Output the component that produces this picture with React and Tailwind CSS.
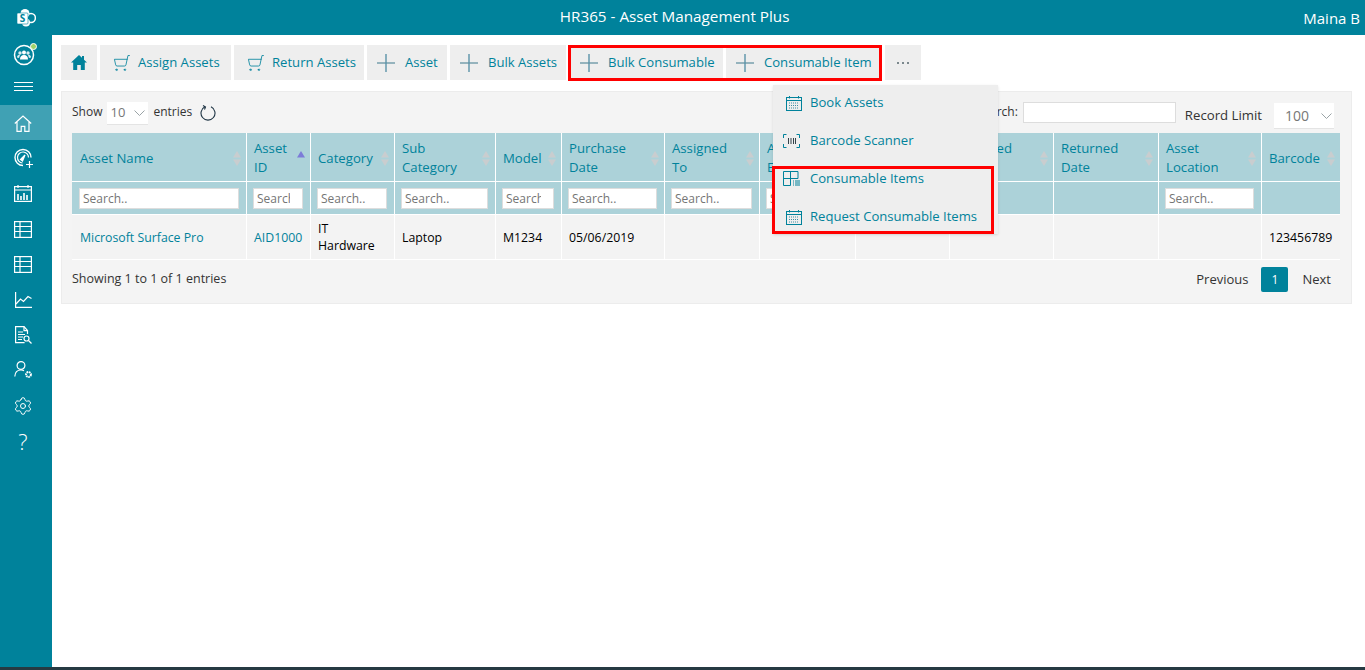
import React from 'react';
import { Settings, ShoppingCart } from 'lucide-react';

const toolbar = [
  { label: 'Assign Assets', icon: 'cart', width: 'w-[131px]' },
  { label: 'Return Assets', icon: 'cart', width: 'w-[130px]' },
  { label: 'Asset', icon: 'plus', width: 'w-[80px]' },
  { label: 'Bulk Assets', icon: 'plus', width: 'w-[116px]' },
];

const columns = [
  { title: 'Asset Name', width: 'w-[174px]', filter: true },
  { title: 'Asset\nID', width: 'w-[64px]', filter: true, sorted: true },
  { title: 'Category', width: 'w-[84px]', filter: true },
  { title: 'Sub\nCategory', width: 'w-[101px]', filter: true },
  { title: 'Model', width: 'w-[66px]', filter: true },
  { title: 'Purchase\nDate', width: 'w-[103px]', filter: true },
  { title: 'Assigned\nTo', width: 'w-[95px]', filter: true },
  { title: 'Asset\nExpiry', width: 'w-[96px]', filter: true },
  { title: 'Status', width: 'w-[94px]', filter: true },
  { title: 'Assigned\nDate', width: 'w-[104px]' },
  { title: 'Returned\nDate', width: 'w-[105px]' },
  { title: 'Asset\nLocation', width: 'w-[103px]', filter: true },
  { title: 'Barcode', width: 'w-[79px]' },
];

const row = [
  { text: 'Microsoft Surface Pro', link: true },
  { text: 'AID1000', link: true },
  { text: 'IT\nHardware' },
  { text: 'Laptop' },
  { text: 'M1234' },
  { text: '05/06/2019' },
  { text: '' },
  { text: '' },
  { text: '' },
  { text: '' },
  { text: '' },
  { text: '' },
  { text: '123456789' },
];

const PlusIcon = () => (
  <svg width="18" height="18" viewBox="0 0 18 18" className="shrink-0">
    <path d="M0 9h18" stroke="#6f9aa8" strokeWidth="1.4" />
    <path d="M9 0v18" stroke="#5b93a8" strokeWidth="1.4" />
  </svg>
);

const CartIcon = () => (
  <ShoppingCart size={18} strokeWidth={1.1} color="#00829b" className="shrink-0 -scale-x-100" />
);

const HomeFilled = () => (
  <svg width="16" height="15" viewBox="0 0 16 15" fill="#00829b">
    <path d="M8 0 0 7.5h2.2V15h4v-5h3.6v5h4V7.5H16L13 4.7V1h-2v1.8z" />
  </svg>
);

const CalendarIcon = () => (
  <svg width="16" height="15" viewBox="0 0 16 15" fill="none" stroke="#00829b" className="shrink-0 ml-[3px]">
    <rect x="0.5" y="1.5" width="15" height="13" />
    <path d="M0.5 4.5h15M3.500 0v2.500M12.500 0v2.500" />
    <path d="M3 7h10M3 9.500h10M3 12h10" strokeDasharray="1 1" stroke="#3d8fa3" />
  </svg>
);

const BarcodeIcon = () => (
  <svg width="17" height="14" viewBox="0 0 17 14" fill="none" stroke="#00829b" className="shrink-0">
    <path d="M3.500.5h-3v3.500M.5 10v3.500h3M13.500.5h3v3.500M16.500 10v3.500h-3" />
    <path d="M5.500 4v6M8 4v6M10.500 4v6M12.500 4v6" stroke="#33424a" />
  </svg>
);

const GridListIcon = () => (
  <svg width="17" height="15" viewBox="0 0 17 15" fill="none" stroke="#00829b" className="shrink-0 -mt-[2px]">
    <path d="M.5 14.500V.5h14.500v7M7.500.5v14M.5 7.500H15M.5 14.500h7" />
    <path d="M10 10h1M12 10h5M10 12h1M12 12h5M10 14h1M12 14h5" />
  </svg>
);

const SharePointIcon = () => (
  <svg width="19" height="18" viewBox="0 0 19 18">
    <circle cx="14" cy="9" r="4.400" fill="none" stroke="#fff" strokeWidth="1.500" />
    <circle cx="9" cy="13.500" r="4" fill="#fff" />
    <circle cx="8" cy="4.500" r="4.500" fill="#fff" />
    <rect x="0" y="4" width="11" height="11" rx="1" fill="#fff" stroke="#00829b" strokeWidth="0.6" />
    <text x="5.500" y="12.800" textAnchor="middle" fontSize="10" fontWeight="700" fontFamily="Open Sans, sans-serif" fill="#00829b">S</text>
  </svg>
);

const TeamIcon = () => (
  <div className="relative">
    <svg width="22" height="22" viewBox="0 0 22 22">
      <circle cx="11" cy="11" r="9.500" fill="none" stroke="#fff" strokeWidth="1.500" />
      <circle cx="7" cy="9" r="1.700" fill="#fff" opacity="0.85" />
      <circle cx="15" cy="9" r="1.700" fill="#fff" opacity="0.85" />
      <circle cx="11" cy="8.500" r="2" fill="#fff" />
      <path d="M7 15.500c0-3 1.500-4.500 4-4.500s4 1.500 4 4.500z" fill="#fff" />
      <path d="M4 13.500c0-2 1-2.800 2.500-2.800l.5.300-1 3zM18 13.500c0-2-1-2.800-2.500-2.800l-.5.300 1 3z" fill="#fff" opacity="0.85" />
    </svg>
    <span className="absolute -top-[1px] -right-[2px] w-[7px] h-[7px] rounded-full bg-[#9ed36a] border border-white" />
  </div>
);

const stroke = { fill: 'none', stroke: '#fff', strokeWidth: 1.2 };

const sideIcons = [
  <svg key="home" width="18" height="17" viewBox="0 0 18 17" {...stroke}>
    <path d="M.8 8.500 9 1l8.200 7.500M3 7v9.300h4.200v-5h3.600v5H15V7" />
  </svg>,
  <svg key="gauge" width="21" height="20" viewBox="0 0 21 20" {...stroke}>
    <path d="M10 17.500a8 8 0 1 1 8-8" strokeWidth="1.400" />
    <path d="M9.500 15a5.500 5.500 0 1 1 6-5.500" />
    <path d="M7.500 11.500 12 7l-2.500 6z" fill="#fff" />
    <path d="M13 16.500h7M16.500 13v7" />
  </svg>,
  <svg key="cal" width="18" height="17" viewBox="0 0 18 17" {...stroke}>
    <rect x=".6" y="1.600" width="16.800" height="14.800" />
    <path d="M.6 5h16.800M4 0v3M14 0v3" />
    <path d="M4 15V9M7 15v-4M10 15V8M13 15v-5" strokeWidth="1.600" />
  </svg>,
  <svg key="table1" width="18" height="17" viewBox="0 0 18 17" {...stroke}>
    <rect x=".6" y=".6" width="16.800" height="15.800" />
    <path d="M.6 5.500h16.800M.6 10.500h16.800M6 .6v15.800" />
  </svg>,
  <svg key="table2" width="18" height="17" viewBox="0 0 18 17" {...stroke}>
    <rect x=".6" y=".6" width="16.800" height="15.800" />
    <path d="M.6 5.500h16.800M.6 10.500h16.800M6 .6v15.800" />
  </svg>,
  <svg key="chart" width="17" height="16" viewBox="0 0 17 16" {...stroke}>
    <path d="M.6 0v15.400H17" />
    <path d="M1 12l4.500-5 3 2.500L13 4.500l3.500 2" />
  </svg>,
  <svg key="doc" width="17" height="18" viewBox="0 0 17 18" {...stroke}>
    <path d="M12.500 8V4.500L9 .6H.6v16h9" />
    <path d="M9 .6v4h3.500M3 6h5M3 8.500h7M3 11h5M3 13.500h4" />
    <circle cx="11.500" cy="12.500" r="2.500" />
    <path d="m13.500 14.500 3 3" />
  </svg>,
  <svg key="user" width="19" height="18" viewBox="0 0 19 18" {...stroke}>
    <circle cx="7" cy="4.500" r="3.900" />
    <path d="M.8 15.500c.2-4 2.600-6.500 6.200-6.500 1.200 0 2.200.3 3 .8" />
    <circle cx="14.500" cy="13.500" r="2.400" strokeWidth="2" strokeDasharray="1.500 0.600" />
  </svg>,
  <Settings key="gear" size={20} strokeWidth={1.2} color="#fff" />,
];

const SortArrows = ({ active }) => (
  <svg width="8" height="15" viewBox="0 0 8 15" className="shrink-0">
    <path d="M4 0 8 6.500H0z" fill={active ? '#7c7cd8' : '#c9cdcf'} />
    {!active && <path d="M4 15 8 8.500H0z" fill="#c9cdcf" />}
  </svg>
);

const Chevron = () => (
  <svg width="11" height="6" viewBox="0 0 11 6" fill="none" stroke="#9aa3a6" className="shrink-0">
    <path d="m.5.500 5 5 5-5" />
  </svg>
);

const Sidebar = () => (
  <aside className="w-[52px] shrink-0 bg-[#00829b] flex flex-col">
    <div className="h-[40px] w-full flex items-center justify-center pr-[4px]">
      <TeamIcon />
    </div>
    <div className="h-[22px] w-full flex items-center justify-center pr-[6px]">
      <div className="w-[19px] flex flex-col gap-[3px]">
        <span className="h-[1px] bg-white" />
        <span className="h-[1px] bg-white" />
        <span className="h-[1px] bg-white" />
      </div>
    </div>
    <div className="mt-[8px] w-full flex flex-col">
      {sideIcons.map((icon, i) => (
        <div
          key={i}
          className={`h-[35.3px] w-full flex items-center justify-center pr-[6px] pt-[1px] ${i === 0 ? 'bg-[#40a1b4]' : ''}`}
        >
          {icon}
        </div>
      ))}
      <div className="h-[37px] w-full flex items-center justify-center pr-[6px] text-white text-[22px] font-light">?</div>
    </div>
  </aside>
);

const ToolButton = ({ label, icon, width }) => (
  <button
    className={`${width} h-[35px] bg-[#eeeeee] flex items-center text-[13.1px] text-[#00829b] ${
      icon === 'cart' ? 'pl-[13px] gap-[7px]' : 'pl-[10px] gap-[10px]'
    }`}
  >
    {icon === 'cart' ? <CartIcon /> : <PlusIcon />}
    <span className="whitespace-nowrap">{label}</span>
  </button>
);

const Dropdown = () => (
  <div className="absolute left-[721px] top-[50px] w-[225px] h-[149px] pt-[1px] bg-[#eeeeee] shadow-sm flex flex-col gap-[4px] text-[13.1px] text-[#00829b] z-10">
    {[
      { label: 'Book Assets', icon: <CalendarIcon /> },
      { label: 'Barcode Scanner', icon: <BarcodeIcon /> },
      { label: 'Consumable Items', icon: <GridListIcon /> },
      { label: 'Request Consumable Items', icon: <CalendarIcon /> },
    ].map((item) => (
      <div key={item.label} className="h-[34px] pl-[10px] flex items-center gap-[9px]">
        <span className="w-[18px] flex justify-start">{item.icon}</span>
        <span className="whitespace-nowrap">{item.label}</span>
      </div>
    ))}
    <div className="absolute left-[-1px] top-[81px] w-[222px] h-[68px] border-[3px] border-[#ff0000] pointer-events-none" />
  </div>
);

const Table = () => (
  <table className="table-fixed border-separate border-spacing-0 w-[1268px]">
    <colgroup>
      {columns.map((col) => (
        <col key={col.title} className={col.width} />
      ))}
    </colgroup>
    <thead>
      <tr>
        {columns.map((col, i) => (
          <th
            key={col.title}
            className={`h-[49px] p-0 bg-[#acd2d9] border-b border-white font-normal text-left ${i > 0 ? 'border-l' : ''}`}
          >
            <div className={`flex items-center justify-between pr-[5px] pt-[2px] text-[13.2px] leading-[19px] text-[#00829b] whitespace-pre-line ${i > 0 ? 'pl-[7px]' : 'pl-[8px]'}`}>
              <span>{col.title}</span>
              <SortArrows active={col.sorted} />
            </div>
          </th>
        ))}
      </tr>
      <tr>
        {columns.map((col, i) => (
          <th
            key={col.title}
            className={`h-[33px] py-0 pr-[7px] bg-[#acd2d9] border-b border-white font-normal ${i > 0 ? 'border-l pl-[6px]' : 'pl-[7px]'}`}
          >
            {col.filter && (
              <input
                placeholder="Search.."
                className="block w-full h-[21px] bg-white border border-[#dddddd] pl-[3px] pr-[12px] text-[12px] text-[#444] placeholder:text-[#757575] outline-none"
              />
            )}
          </th>
        ))}
      </tr>
    </thead>
    <tbody>
      <tr>
        {row.map((cell, i) => (
          <td
            key={i}
            className={`h-[45px] pr-[8px] py-0 bg-[#f3f3f3] border-b border-white text-[12.3px] leading-[17px] whitespace-pre-line ${
              cell.link ? 'text-[#00829b]' : 'text-black'
            } ${i > 0 ? 'border-l pl-[7px]' : 'pl-[8px]'}`}
          >
            {cell.text}
          </td>
        ))}
      </tr>
    </tbody>
  </table>
);

export default function App() {
  return (
    <div className="w-[1365px] h-[670px] overflow-hidden flex flex-col bg-white font-['Open_Sans',sans-serif]">
      {/* Top bar */}
      <header className="h-[35px] shrink-0 bg-[#00829b] flex items-center text-white">
        <div className="w-[52px] flex justify-center">
          <SharePointIcon />
        </div>
        <div className="flex-1 text-center text-[15.25px] pr-[6px] pb-[3px]">HR365 - Asset Management Plus</div>
        <div className="text-[15px] pr-[5px] pt-[2px]">Maina B</div>
      </header>

      <div className="flex-1 flex min-h-0">
        <Sidebar />

        <main className="relative flex-1 pl-[9px] pt-[10px]">
          {/* Toolbar */}
          <div className="flex items-center gap-[3px]">
            <button className="w-[36px] h-[35px] bg-[#eeeeee] flex items-center justify-center">
              <HomeFilled />
            </button>
            {toolbar.map((item) => (
              <ToolButton key={item.label} {...item} />
            ))}
            <div className="relative flex gap-[3px] ml-[1px]">
              <ToolButton label="Bulk Consumable" icon="plus" width="w-[153px]" />
              <ToolButton label="Consumable Item" icon="plus" width="w-[155px]" />
              <div className="absolute -left-[2px] -right-[1px] top-0 -bottom-[1px] border-[3px] border-[#ff0000] pointer-events-none" />
            </div>
            <button className="w-[36px] h-[35px] ml-[1px] bg-[#eeeeee] flex items-center justify-center gap-[3px]">
              <span className="w-[2px] h-[2px] bg-[#55666c] rounded-full" />
              <span className="w-[2px] h-[2px] bg-[#55666c] rounded-full" />
              <span className="w-[2px] h-[2px] bg-[#55666c] rounded-full" />
            </button>
          </div>

          <Dropdown />

          {/* Assets panel */}
          <section className="mt-[11px] w-[1291px] h-[213px] bg-[#f4f4f4] border border-[#ececec] px-[10px]">
            <div className="h-[41px] flex text-[12px] text-[#333]">
              <div className="flex items-start pt-[10px]">
                <span className="leading-[20px]">Show</span>
                <div className="ml-[5px] w-[41px] h-[23px] bg-white border-b border-[#e4e4e4] flex items-center justify-between pl-[3px] pr-[3px] text-[13px] text-[#777]">
                  10
                  <Chevron />
                </div>
                <span className="ml-[5px] leading-[20px]">entries</span>
                <svg width="16" height="16" viewBox="0 0 16 16" fill="none" stroke="#1d3343" strokeWidth="1.100" className="ml-[8px] mt-[3px]">
                  <path d="M5 1.800a7 7 0 1 0 6 0" />
                  <path d="M3 .5 5.500 2 4.500 4.500" />
                </svg>
              </div>
              <div className="ml-auto flex items-start pt-[10px] pr-[7px]">
                <span className="leading-[20px] mr-[5px]">Search:</span>
                <div className="w-[153px] h-[21px] bg-white border border-[#dddddd]" />
                <span className="ml-[9px] mt-[3px] text-[13.2px] leading-[20px]">Record Limit</span>
                <div className="ml-[12px] mt-[1px] w-[60px] h-[26px] bg-white border-b border-[#e4e4e4] flex items-center justify-between pl-[11px] pr-[2px] text-[14px] text-[#777]">
                  100
                  <Chevron />
                </div>
              </div>
            </div>

            <Table />

            <div className="mt-[7px] flex items-center justify-between text-[#333]">
              <span className="text-[12.5px] pb-[1px]">Showing 1 to 1 of 1 entries</span>
              <div className="flex items-center text-[13px] pr-[10px]">
                <span className="pt-[1px]">Previous</span>
                <span className="ml-[13px] w-[27px] h-[25px] rounded-[2px] bg-[#00829b] text-white flex items-center justify-center text-[12px]">1</span>
                <span className="ml-[14px] pt-[1px]">Next</span>
              </div>
            </div>
          </section>
        </main>
      </div>

      <div className="h-[3px] shrink-0 bg-[#263a42]" />
    </div>
  );
}
